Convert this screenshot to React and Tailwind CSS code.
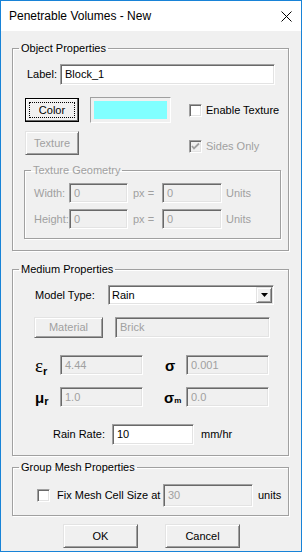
import React from "react";

const sunken =
  "border border-t-[#a0a0a0] border-l-[#a0a0a0] border-r-white border-b-white shadow-[inset_1px_1px_0_#696969,inset_-1px_-1px_0_#e3e3e3]";
const raised =
  "border border-t-[#e3e3e3] border-l-[#e3e3e3] border-r-[#696969] border-b-[#696969] shadow-[inset_1px_1px_0_#ffffff,inset_-1px_-1px_0_#a0a0a0]";

function Field({ value, disabled, className = "" }) {
  return (
    <div
      className={`flex items-center shrink-0 pl-[4px] ${sunken} ${
        disabled ? "bg-[#f0f0f0] text-[#a0a0a0]" : "bg-white text-black"
      } ${className}`}
    >
      {value}
    </div>
  );
}

function Button({ children, disabled, className = "" }) {
  return (
    <div
      className={`flex items-center justify-center shrink-0 bg-[#f0f0f0] ${raised} ${
        disabled ? "text-[#a0a0a0]" : "text-black"
      } ${className}`}
    >
      {children}
    </div>
  );
}

function Check({ checked, disabled, className = "" }) {
  return (
    <div
      className={`w-[13px] h-[13px] shrink-0 flex items-center justify-center ${sunken} ${
        disabled ? "bg-[#f0f0f0]" : "bg-white"
      } ${className}`}
    >
      {checked && (
        <svg width="9" height="9" viewBox="0 0 9 9">
          <path
            d="M1 4 L3 6.5 L8 1.5"
            fill="none"
            stroke={disabled ? "#a0a0a0" : "#000"}
            strokeWidth="1.8"
          />
        </svg>
      )}
    </div>
  );
}

function Group({ title, disabled, className = "", children }) {
  return (
    <fieldset
      className={`border border-[#a0a0a0] shadow-[1px_1px_0_#ffffff,inset_1px_1px_0_#ffffff] ${className}`}
    >
      <legend
        className={`ml-[6px] px-[2px] leading-[14px] ${
          disabled ? "text-[#a0a0a0]" : "text-black"
        }`}
      >
        {title}
      </legend>
      {children}
    </fieldset>
  );
}

export default function App() {
  return (
    <div className="w-[302px] h-[552px] border border-[#1883d7] bg-[#f0f0f0] flex flex-col font-['Liberation_Sans',Arial,sans-serif] text-[11px] text-black overflow-hidden">
      {/* title bar */}
      <div className="h-[30px] shrink-0 bg-white flex items-center justify-between pl-[8px] pr-[9px]">
        <span className="text-[12px]">Penetrable Volumes - New</span>
        <svg width="11" height="11" viewBox="0 0 11 11">
          <path d="M0.5 0.5 L10.5 10.5 M10.5 0.5 L0.5 10.5" stroke="#000" strokeWidth="1" />
        </svg>
      </div>

      <div className="flex flex-col pl-[11px]">
        {/* Object Properties */}
        <Group title="Object Properties" className="w-[277px] mt-[10px] pb-[11px]">
          <div className="flex items-center mt-[9px] pl-[14px]">
            <span className="w-[33px]">Label:</span>
            <Field value="Block_1" className="w-[215px] h-[21px]" />
          </div>

          <div className="flex items-center mt-[12px] pl-[12px]">
            <div className="w-[54px] h-[24px] shrink-0 border border-black bg-[#f0f0f0] shadow-[inset_-1px_-1px_0_#696969,inset_1px_1px_0_#ffffff] p-[3px]">
              <div className="w-full h-full border border-dotted border-black flex items-center justify-center">
                Color
              </div>
            </div>
            <div className="ml-[11px] w-[81px] h-[26px] shrink-0 border border-[#a0a0a0] border-r-white border-b-white bg-[#f0f0f0] p-[3px]">
              <div className="w-full h-full bg-[#80ffff]" />
            </div>
            <Check className="ml-[18px]" />
            <span className="ml-[4px]">Enable Texture</span>
          </div>

          <div className="flex items-center mt-[8px] pl-[12px]">
            <Button disabled className="w-[54px] h-[24px]">
              Texture
            </Button>
            <Check checked disabled className="ml-[110px] mt-[6px]" />
            <span className="ml-[4px] mt-[6px] text-[#a0a0a0]">Sides Only</span>
          </div>

          <Group title="Texture Geometry" disabled className="w-[257px] ml-[11px] mt-[8px] pb-[9px]">
            <div className="flex items-center mt-[6px] pl-[9px] text-[#a0a0a0]">
              <span className="w-[35px]">Width:</span>
              <Field disabled value="0" className="w-[59px] h-[20px]" />
              <span className="w-[34px] pl-[5px]">px =</span>
              <Field disabled value="0" className="w-[60px] h-[20px]" />
              <span className="ml-[4px]">Units</span>
            </div>
            <div className="flex items-center mt-[6px] pl-[9px] text-[#a0a0a0]">
              <span className="w-[35px]">Height:</span>
              <Field disabled value="0" className="w-[59px] h-[20px]" />
              <span className="w-[34px] pl-[5px]">px =</span>
              <Field disabled value="0" className="w-[60px] h-[20px]" />
              <span className="ml-[4px]">Units</span>
            </div>
          </Group>
        </Group>

        {/* Medium Properties */}
        <Group title="Medium Properties" className="w-[277px] mt-[11px] pb-[10px]">
          <div className="flex items-center mt-[9px] pl-[22px]">
            <span className="w-[73px]">Model Type:</span>
            <div className={`w-[166px] h-[20px] shrink-0 bg-white flex items-center justify-between pl-[3px] pr-[1px] ${sunken}`}>
              <span>Rain</span>
              <div className={`w-[16px] h-[16px] bg-[#f0f0f0] flex items-center justify-center ${raised}`}>
                <svg width="7" height="4" viewBox="0 0 7 4">
                  <path d="M0 0 H7 L3.5 4 Z" fill="#000" />
                </svg>
              </div>
            </div>
          </div>

          <div className="flex items-center mt-[12px] pl-[21px]">
            <Button disabled className="w-[69px] h-[21px]">
              Material
            </Button>
            <Field disabled value="Brick" className="ml-[12px] w-[155px] h-[21px]" />
          </div>

          <div className="flex items-center mt-[17px] pl-[22px]">
            <span className="w-[25px] flex items-end leading-none">
              <span className="font-['Liberation_Serif',serif] text-[19px]">ε</span>
              <span className="font-bold text-[11px] -mb-[2px]">r</span>
            </span>
            <Field disabled value="4.44" className="w-[83px] h-[20px]" />
            <span className="w-[43px] pl-[22px] font-bold text-[15px] leading-none">σ</span>
            <Field disabled value="0.001" className="w-[83px] h-[20px]" />
          </div>

          <div className="flex items-center mt-[12px] pl-[22px]">
            <span className="w-[25px] flex items-end leading-none">
              <span className="font-bold text-[15px]">μ</span>
              <span className="font-bold text-[11px] -mb-[2px]">r</span>
            </span>
            <Field disabled value="1.0" className="w-[83px] h-[20px]" />
            <span className="w-[43px] pl-[21px] flex items-end leading-none">
              <span className="font-bold text-[15px]">σ</span>
              <span className="font-bold text-[8px]">m</span>
            </span>
            <Field disabled value="0.0" className="w-[83px] h-[20px]" />
          </div>

          <div className="flex items-center mt-[17px] pl-[40px]">
            <span className="w-[59px]">Rain Rate:</span>
            <Field value="10" className="w-[82px] h-[21px]" />
            <span className="ml-[7px]">mm/hr</span>
          </div>
        </Group>

        {/* Group Mesh Properties */}
        <Group title="Group Mesh Properties" className="w-[277px] mt-[4px] pb-[8px]">
          <div className="flex items-center mt-[10px] pl-[24px]">
            <Check />
            <span className="ml-[7px] w-[106px]">Fix Mesh Cell Size at</span>
            <Field disabled value="30" className="w-[90px] h-[23px]" />
            <span className="ml-[5px]">units</span>
          </div>
        </Group>

        <div className="flex mt-[8px] pl-[51px] gap-[27px]">
          <Button className="w-[75px] h-[24px]">OK</Button>
          <Button className="w-[75px] h-[24px]">Cancel</Button>
        </div>
      </div>
    </div>
  );
}
